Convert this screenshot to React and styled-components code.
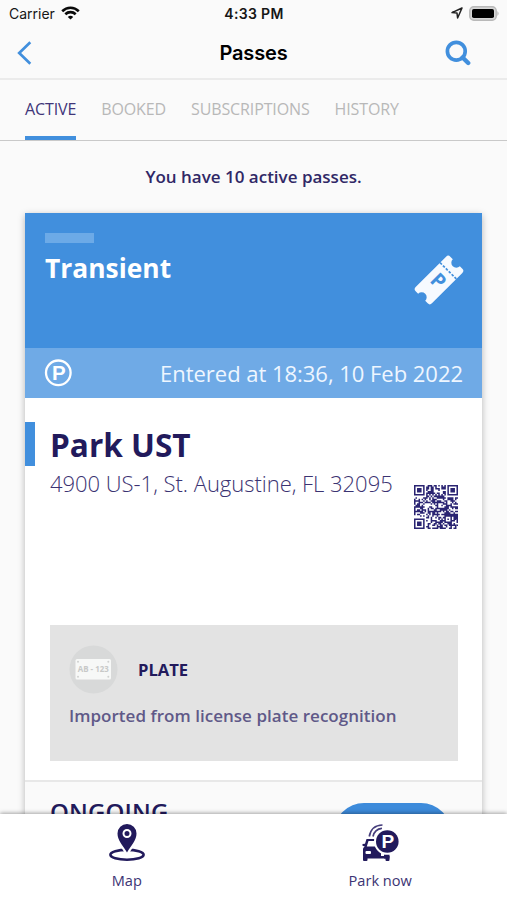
/**
*
* Passes
*
*/

import React from 'react';
import styled, { createGlobalStyle } from 'styled-components';

const GlobalStyle = createGlobalStyle`
  * {
    box-sizing: border-box;
  }
  body {
    margin: 0;
    background: #fafafa;
    font-family: "Open Sans", "Noto Sans", sans-serif;
    color: #221a5c;
  }
`;

const Screen = styled.div`
  display: flex;
  flex-direction: column;
  width: 507px;
  height: 900px;
  overflow: hidden;
  background: #fafafa;
`;

const StatusBar = styled.div`
  display: grid;
  grid-template-columns: 1fr auto 1fr;
  align-items: center;
  flex: none;
  height: 26px;
  padding: 0 7px 0 9px;
  font-family: Inter, "Liberation Sans", sans-serif;
  font-size: 14px;
  color: #161616;
`;

const StatusGroup = styled.div`
  display: flex;
  align-items: center;
  justify-content: ${props => (props.$end ? 'flex-end' : 'flex-start')};
  gap: 6px;
`;

const Clock = styled.span`
  margin-right: 1px;
  font-size: 14px;
  font-weight: 600;
  letter-spacing: 0.35px;
`;

const NavBar = styled.header`
  display: grid;
  grid-template-columns: 1fr auto 1fr;
  align-items: center;
  flex: none;
  height: 54px;
  padding: 1px 36px 0 17px;
  border-bottom: 2px solid #ebebeb;
`;

const NavTitle = styled.h1`
  margin: 0 0 0 19px;
  font-family: Inter, "Liberation Sans", sans-serif;
  font-size: 20px;
  font-weight: 600;
  letter-spacing: -0.15px;
  color: #000;
`;

const IconButton = styled.button`
  display: flex;
  justify-self: ${props => (props.$end ? 'end' : 'start')};
  padding: 0;
  border: 0;
  background: none;
`;

const Tabs = styled.nav`
  display: flex;
  flex: none;
  gap: 25px;
  height: 61px;
  padding: 0 25px;
  border-bottom: 1px solid #c9c9c9;
`;

const Tab = styled.span`
  display: flex;
  align-items: center;
  height: 60px;
  padding-top: 1px;
  border-bottom: ${props => (props.$active ? '4px solid #418fdd' : '0')};
  padding-bottom: ${props => (props.$active ? '0' : '4px')};
  font-size: 16px;
  letter-spacing: -0.12px;
  color: ${props => (props.$active ? '#403579' : '#b8b8b8')};
`;

const Content = styled.main`
  flex: 1;
  min-height: 0;
  overflow: hidden;
`;

const Notice = styled.p`
  margin: 0;
  height: 72px;
  line-height: 71px;
  text-align: center;
  font-size: 17px;
  font-weight: 600;
  color: #302866;
`;

const Card = styled.section`
  width: 457px;
  height: 700px;
  margin-left: 25px;
  background: #fff;
  box-shadow: 0 2px 7px rgba(0, 0, 0, 0.28);
`;

const CardHeader = styled.div`
  display: flex;
  justify-content: space-between;
  height: 135px;
  padding: 20px 18px 0 20px;
  background: #418fdd;
`;

const Dash = styled.div`
  width: 49px;
  height: 10px;
  background: #6caae7;
`;

const PassType = styled.h2`
  margin: 5px 0 0;
  line-height: 40px;
  font-size: 26.4px;
  font-weight: 700;
  color: #fff;
`;

const TicketWrap = styled.div`
  padding-top: 22px;
`;

const Strip = styled.div`
  display: flex;
  align-items: center;
  justify-content: space-between;
  height: 50px;
  padding: 0 19px;
  background: #6faae6;
  font-size: 22px;
  letter-spacing: -0.03px;
  color: #eef6ff;
`;

const Place = styled.div`
  display: flex;
  align-items: center;
  height: 44px;
  margin-top: 24px;
  padding-left: 15px;
  border-left: 10px solid #418fdd;
  font-size: 31.6px;
  font-weight: 700;
  color: #221a5c;
`;

const AddressRow = styled.div`
  display: flex;
  justify-content: space-between;
  height: 159px;
  padding: 0 24px 0 25px;
`;

const Address = styled.div`
  line-height: 35px;
  font-size: 22px;
  font-weight: 300;
  letter-spacing: -0.03px;
  color: #3b3372;
`;

const CodeWrap = styled.div`
  padding-top: 19px;
`;

const Plate = styled.div`
  height: 136px;
  margin: 0 24px 0 25px;
  padding: 20px 19px;
  background: #e3e3e3;
`;

const PlateHead = styled.div`
  display: flex;
  align-items: center;
  gap: 20px;
  height: 49px;
  font-size: 16.6px;
  font-weight: 700;
  color: #221a5c;
`;

const PlateText = styled.div`
  line-height: 44px;
  font-size: 17px;
  font-weight: 600;
  letter-spacing: 0.03px;
  color: #5f5988;
`;

const CardFooter = styled.div`
  display: flex;
  justify-content: space-between;
  height: 120px;
  margin-top: 19px;
  padding: 21px 31px 0 25px;
  border-top: 2px solid #e8e8e8;
  background: #fafafa;
`;

const Ongoing = styled.div`
  margin-top: -8px;
  line-height: 34px;
  font-size: 24px;
  font-weight: 600;
  letter-spacing: 0.15px;
`;

const PillButton = styled.button`
  width: 117px;
  height: 60px;
  border: 0;
  border-radius: 30px;
  background: #3d8bdb;
`;

const BottomBar = styled.footer`
  display: grid;
  grid-template-columns: 1fr 1fr;
  flex: none;
  height: 86px;
  background: #fff;
  box-shadow: 0 -1px 4px rgba(0, 0, 0, 0.35);
  z-index: 1;
`;

const BottomItem = styled.div`
  display: flex;
  flex-direction: column;
  align-items: center;
  padding-top: 10px;
  font-size: 14.6px;
  line-height: 20px;
  color: #3c3474;
  gap: 8px;
`;

function Wifi() {
  return (
    <svg width="19" height="14" viewBox="0 0 19 14" fill="none" stroke="#0a0a0a" strokeWidth="2.6">
      <path d="M1.2 5.2C6 .6 13 .6 17.8 5.2" />
      <path d="M4.3 8.2C7.2 5.4 11.8 5.4 14.7 8.2" />
      <path d="M6.8 10.9C8.3 9.5 10.7 9.5 12.2 10.9L9.5 13.6Z" fill="#0a0a0a" stroke="none" />
    </svg>
  );
}

function Location() {
  return (
    <svg width="12" height="12" viewBox="0 0 12 12" fill="none" stroke="#222" strokeWidth="1.5" strokeLinejoin="round">
      <path d="M11 1L1 5.6L6 6.1L6.6 11Z" />
    </svg>
  );
}

function Battery() {
  return (
    <svg width="31" height="15" viewBox="0 0 31 15">
      <rect x=".8" y=".8" width="26.4" height="13.4" rx="4" fill="#d6d6d6" stroke="#b9b9b9" strokeWidth="1.5" />
      <rect x="3" y="3" width="22" height="9" rx="1.8" fill="#000" />
      <path d="M28.4 5Q30.8 7.5 28.4 10Z" fill="#b5b5b5" />
    </svg>
  );
}

function Back() {
  return (
    <svg width="15" height="24" viewBox="0 0 15 24" fill="none" stroke="#418fdd" strokeWidth="2.7">
      <path d="M13.3 1.2L2.2 12L13.3 22.8" />
    </svg>
  );
}

function Search() {
  return (
    <svg width="26" height="26" viewBox="0 0 26 26" fill="none" stroke="#418fdd">
      <circle cx="11.3" cy="11.2" r="8.9" strokeWidth="3.7" />
      <path d="M17.6 17.5L23.2 23" strokeWidth="4.4" strokeLinecap="round" />
    </svg>
  );
}

function Ticket() {
  return (
    <svg width="50" height="50" viewBox="0 0 50 50">
      <g transform="translate(25 25) rotate(-45)">
        <path
          d="M-21.5 -11.5H21.5Q24.5 -11.5 24.5 -8.5V-5A5 5 0 0 0 24.5 5V8.5Q24.5 11.5 21.5 11.5H-21.5Q-24.5 11.5 -24.5 8.5V5A5 5 0 0 0 -24.5 -5V-8.5Q-24.5 -11.5 -21.5 -11.5Z"
          fill="#f6faff"
        />
        <path d="M13 -11.5V11.5" stroke="#418fdd" strokeWidth="1.7" strokeDasharray="2.6 1.5" />
        <text
          transform="translate(-1.5 0) rotate(90)"
          x="0"
          y="6.5"
          textAnchor="middle"
          fontFamily="Open Sans"
          fontSize="20"
          fontWeight="700"
          fill="#418fdd"
        >
          P
        </text>
      </g>
    </svg>
  );
}

function ParkingSign() {
  return (
    <svg width="28" height="28" viewBox="0 0 28 28">
      <circle cx="14.3" cy="13.8" r="12.3" fill="none" stroke="#fff" strokeWidth="2.3" />
      <text x="14.8" y="20.8" textAnchor="middle" fontFamily="Liberation Sans" fontSize="20.5" fontWeight="700" fill="#fff">P</text>
    </svg>
  );
}

const SIZE = 29;

// concentric squares of the code, given as [left, top, width]
const MARKS = [[0, 0, 7], [22, 0, 7], [0, 22, 7], [20, 20, 5]];

function isDark(x, y) {
  for (const [mx, my, w] of MARKS) {
    const c = (w - 1) / 2;
    const d = Math.max(Math.abs(x - mx - c), Math.abs(y - my - c));
    if (d <= c) {
      return w === 7 ? d !== 2 : d !== 1;
    }
    if (w === 7 && d === c + 1) {
      return false;
    }
  }
  if (x === 6 || y === 6) {
    return (x + y) % 2 === 0;
  }
  const n = Math.sin(x * 12.9898 + y * 78.233) * 43758.5453;
  return n - Math.floor(n) > 0.47;
}

function QrCode() {
  let d = '';
  for (let y = 0; y < SIZE; y += 1) {
    for (let x = 0; x < SIZE; x += 1) {
      if (isDark(x, y)) d += `M${x} ${y}h1v1h-1z`;
    }
  }
  return (
    <svg width="44" height="44" viewBox="0 0 29 29">
      <path d={d} fill="#2a2472" />
    </svg>
  );
}

function PlateIcon() {
  return (
    <svg width="49" height="49" viewBox="0 0 49 49">
      <circle cx="24.5" cy="24.5" r="24" fill="#d8d9d9" />
      <rect x="6.5" y="14" width="35.5" height="20.5" rx="1.5" fill="#f7f8f7" />
      <g fill="#d0d1d0">
        <circle cx="9" cy="16.8" r="1" />
        <circle cx="39.3" cy="16.8" r="1" />
        <circle cx="9" cy="31.8" r="1" />
        <circle cx="39.3" cy="31.8" r="1" />
      </g>
      <text x="24.3" y="26.8" textAnchor="middle" fontFamily="Open Sans" fontSize="7.9" fontWeight="700" fill="#c8c9c8">AB - 123</text>
    </svg>
  );
}

function MapPin() {
  return (
    <svg width="38" height="38" viewBox="0 0 38 38">
      <ellipse cx="19" cy="30.8" rx="16.6" ry="4.9" fill="none" stroke="#221a5c" strokeWidth="2.6" />
      <path d="M19 29C14.5 21 9.5 16 9.5 10A9.5 9.5 0 0 1 28.5 10C28.5 16 23.5 21 19 29Z" fill="#221a5c" stroke="#fff" strokeWidth="4" />
      <path d="M19 28.5C14.5 21 9.5 16 9.5 9.5A9.5 9.5 0 0 1 28.5 9.5C28.5 16 23.5 21 19 28.5Z" fill="#221a5c" />
      <circle cx="19" cy="9.5" r="3.5" fill="#221a5c" stroke="#fff" strokeWidth="2" />
    </svg>
  );
}

function CarPark() {
  return (
    <svg width="38" height="38" viewBox="0 0 38 38">
      <g fill="none" stroke="#463e7c" strokeWidth="1.7">
        <path d="M8.3 12.5C9.5 5.5 14 1.2 21.5 1" />
        <path d="M12 12.5C13 7.5 16 4.8 21 4.3" />
      </g>
      <path
        d="M5.5 15H20V32H28.5V36Q28.5 37 27.5 37H25.5Q24.5 37 24.5 36V34.5H6.5V36Q6.5 37 5.5 37H3Q2 37 2 36V25Q2 23.5 3.8 22.5L1.5 21.8V20L4 19.8Z"
        fill="#221a5c"
      />
      <path d="M23 30H28.5V34.5H23Z" fill="#221a5c" />
      <path d="M7.5 17H15V22.5H5.8Z" fill="#fff" />
      <rect x="4.5" y="27" width="5.5" height="3" rx="1" fill="#fff" />
      <circle cx="26.3" cy="17.5" r="13.3" fill="#fff" />
      <circle cx="26.3" cy="17.5" r="11.3" fill="#221a5c" />
      <text x="26.8" y="24.2" textAnchor="middle" fontFamily="Liberation Sans" fontSize="19" fontWeight="700" fill="#fff">P</text>
    </svg>
  );
}

function App() {
  return (
    <Screen>
      <GlobalStyle />
      <StatusBar>
        <StatusGroup>
          <span>Carrier</span>
          <Wifi />
        </StatusGroup>
        <Clock>4:33 PM</Clock>
        <StatusGroup $end>
          <Location />
          <Battery />
        </StatusGroup>
      </StatusBar>
      <NavBar>
        <IconButton aria-label="Back"><Back /></IconButton>
        <NavTitle>Passes</NavTitle>
        <IconButton $end aria-label="Search"><Search /></IconButton>
      </NavBar>
      <Tabs>
        <Tab $active>ACTIVE</Tab>
        <Tab>BOOKED</Tab>
        <Tab>SUBSCRIPTIONS</Tab>
        <Tab>HISTORY</Tab>
      </Tabs>
      <Content>
        <Notice>You have 10 active passes.</Notice>
        <Card>
          <CardHeader>
            <div>
              <Dash />
              <PassType>Transient</PassType>
            </div>
            <TicketWrap><Ticket /></TicketWrap>
          </CardHeader>
          <Strip>
            <ParkingSign />
            <span>Entered at 18:36, 10 Feb 2022</span>
          </Strip>
          <Place>Park UST</Place>
          <AddressRow>
            <Address>4900 US-1, St. Augustine, FL 32095</Address>
            <CodeWrap><QrCode /></CodeWrap>
          </AddressRow>
          <Plate>
            <PlateHead>
              <PlateIcon />
              <span>PLATE</span>
            </PlateHead>
            <PlateText>Imported from license plate recognition</PlateText>
          </Plate>
          <CardFooter>
            <Ongoing>ONGOING</Ongoing>
            <PillButton aria-label="Open pass" />
          </CardFooter>
        </Card>
      </Content>
      <BottomBar>
        <BottomItem>
          <MapPin />
          <span>Map</span>
        </BottomItem>
        <BottomItem>
          <CarPark />
          <span>Park now</span>
        </BottomItem>
      </BottomBar>
    </Screen>
  );
}

export default App;
